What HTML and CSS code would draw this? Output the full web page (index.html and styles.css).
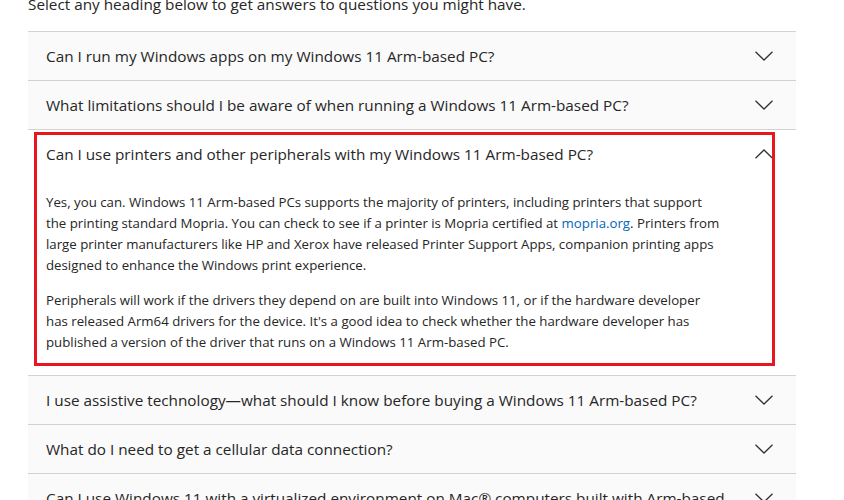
FILE: index.html
```html
<!DOCTYPE html>
<html lang="en">
<head>
<meta charset="utf-8">
<title>Windows 11 Arm-based PC FAQ</title>
<link rel="stylesheet" href="styles.css">
</head>
<body>
<main class="page">
  <p class="intro">Select any heading below to get answers to questions you might have.</p>
  <div class="faq">
    <div class="item">
      <div class="head"><span class="q">Can I run my Windows apps on my Windows 11 Arm-based PC?</span>
        <svg class="chev" viewBox="0 0 18 10" width="18" height="10"><path d="M0.5 0.8 L9 9 L17.5 0.8" /></svg></div>
    </div>
    <div class="item">
      <div class="head"><span class="q">What limitations should I be aware of when running a Windows 11 Arm-based PC?</span>
        <svg class="chev" viewBox="0 0 18 10" width="18" height="10"><path d="M0.5 0.8 L9 9 L17.5 0.8" /></svg></div>
    </div>
    <div class="item open">
      <div class="head"><span class="q">Can I use printers and other peripherals with my Windows 11 Arm-based PC?</span>
        <svg class="chev" viewBox="0 0 18 10" width="18" height="10"><path d="M0.5 9.2 L9 1 L17.5 9.2" /></svg></div>
      <div class="body">
        <p>Yes, you can. Windows 11 Arm-based PCs supports the majority of printers, including printers that support the printing standard Mopria. You can check to see if a printer is Mopria certified at <a href="#">mopria.org</a>. Printers from large printer manufacturers like HP and Xerox have released Printer Support Apps, companion printing apps designed to enhance the Windows print experience.</p>
        <p>Peripherals will work if the drivers they depend on are built into Windows 11, or if the hardware developer has released Arm64 drivers for the device. It's a good idea to check whether the hardware developer has published a version of the driver that runs on a Windows 11 Arm-based PC.</p>
      </div>
      <div class="highlight"></div>
    </div>
    <div class="item">
      <div class="head"><span class="q">I use assistive technology—what should I know before buying a Windows 11 Arm-based PC?</span>
        <svg class="chev" viewBox="0 0 18 10" width="18" height="10"><path d="M0.5 0.8 L9 9 L17.5 0.8" /></svg></div>
    </div>
    <div class="item">
      <div class="head"><span class="q">What do I need to get a cellular data connection?</span>
        <svg class="chev" viewBox="0 0 18 10" width="18" height="10"><path d="M0.5 0.8 L9 9 L17.5 0.8" /></svg></div>
    </div>
    <div class="item">
      <div class="head"><span class="q">Can I use Windows 11 with a virtualized environment on Mac® computers built with Arm-based Apple silicon processors?</span>
        <svg class="chev" viewBox="0 0 18 10" width="18" height="10"><path d="M0.5 0.8 L9 9 L17.5 0.8" /></svg></div>
    </div>
  </div>
</main>
</body>
</html>
```
FILE: styles.css
```css
html, body {
  margin: 0;
  padding: 0;
  background: #ffffff;
}

body {
  font-family: "Open Sans", "Noto Sans", "DejaVu Sans", sans-serif;
  color: #262626;
  overflow: hidden;
}

.page {
  padding-left: 28px;
  width: 768px;
}

.intro {
  margin: -8px 0 0 0;
  font-size: 15.3px;
  line-height: 24px;
  height: 18px;
  padding-bottom: 21px;
}

.faq {
  display: flex;
  flex-direction: column;
}

.item {
  position: relative;
  border-top: 1px solid #d2d2d2;
  background: #fafafa;
}

.item.open {
  background: #ffffff;
}

.head {
  display: flex;
  align-items: flex-start;
  justify-content: space-between;
  gap: 16px;
  padding: 12px 23px 12px 18px;
  font-size: 15.3px;
  line-height: 24px;
}

.q {
  flex: 1;
}

.chev {
  flex: none;
  margin-top: 7px;
  fill: none;
  stroke: #333333;
  stroke-width: 1.3;
}

.body {
  padding: 14px 74px 22px 18px;
  font-size: 13.25px;
  line-height: 21px;
}

.body p {
  margin: 0 0 14px 0;
}

.body p:last-child {
  margin-bottom: 0;
}

.body a {
  color: #0067b8;
  text-decoration: none;
}

.highlight {
  position: absolute;
  left: 6px;
  top: 2px;
  right: 21px;
  bottom: 9px;
  border: 3px solid #e8161f;
  pointer-events: none;
}
```
